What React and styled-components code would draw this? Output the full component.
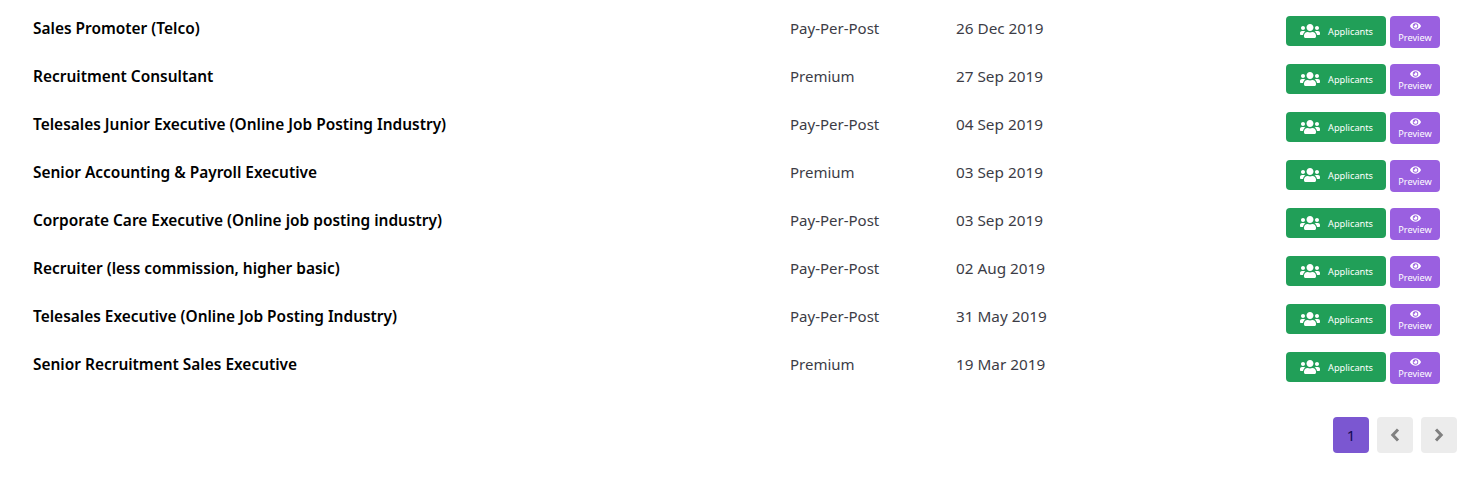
import React from "react"
import styled, { createGlobalStyle } from "styled-components"
import { FaUsers, FaEye } from "react-icons/fa"

const jobs = [
  { title: "Sales Promoter (Telco)", plan: "Pay-Per-Post", date: "26 Dec 2019" },
  { title: "Recruitment Consultant", plan: "Premium", date: "27 Sep 2019" },
  { title: "Telesales Junior Executive (Online Job Posting Industry)", plan: "Pay-Per-Post", date: "04 Sep 2019" },
  { title: "Senior Accounting & Payroll Executive", plan: "Premium", date: "03 Sep 2019" },
  { title: "Corporate Care Executive (Online job posting industry)", plan: "Pay-Per-Post", date: "03 Sep 2019" },
  { title: "Recruiter (less commission, higher basic)", plan: "Pay-Per-Post", date: "02 Aug 2019" },
  { title: "Telesales Executive (Online Job Posting Industry)", plan: "Pay-Per-Post", date: "31 May 2019" },
  { title: "Senior Recruitment Sales Executive", plan: "Premium", date: "19 Mar 2019" },
]

const GlobalStyle = createGlobalStyle`
  body {
    margin: 0;
    background: #fff;
    font-family: "Noto Sans", "Open Sans", sans-serif;
  }
`

const Page = styled.div`
  width: 1462px;
  height: 481px;
  overflow: hidden;
  padding-top: 8px;
  box-sizing: border-box;
`

const Row = styled.div`
  display: grid;
  grid-template-columns: 757px 166px 330px auto;
  align-items: center;
  height: 48px;
  padding-left: 33px;
`

const Title = styled.div`
  font-size: 15.45px;
  font-weight: 600;
  color: #000;
  margin-top: -8px;
`

const Cell = styled.div`
  font-size: ${p => p.size || "15px"};
  color: #3c3c46;
  margin-top: -8px;
`

const Actions = styled.div`
  display: flex;
  gap: 4px;
`

const ApplicantsButton = styled.div`
  display: flex;
  align-items: center;
  justify-content: center;
  gap: 8px;
  width: 100px;
  height: 30px;
  padding-left: 1px;
  background: #219f58;
  border-radius: 4px;
  color: #fff;
  font-size: 9.2px;
  box-sizing: border-box;
  svg {
    width: 20px;
    height: 16px;
  }
`

const PreviewButton = styled.div`
  display: flex;
  flex-direction: column;
  align-items: center;
  justify-content: center;
  width: 50px;
  height: 32px;
  padding-top: 1px;
  box-sizing: border-box;
  background: #9a60e0;
  border-radius: 4px;
  color: #fff;
  font-size: 9.2px;
  line-height: 13px;
  svg {
    width: 11px;
    height: 10px;
  }
`

const Pager = styled.div`
  display: flex;
  justify-content: flex-end;
  gap: 8px;
  padding: 25px 5px 0 0;
`

const PageButton = styled.div`
  display: flex;
  align-items: center;
  justify-content: center;
  width: 36px;
  height: 36px;
  border-radius: 4px;
  font-size: 15px;
  background: ${p => (p.active ? "#7b57d1" : "#ececec")};
  color: ${p => (p.active ? "#120a50" : "#808080")};
`

const Chevron = ({ points }) => (
  <svg width="10" height="14" viewBox="0 0 10 14" fill="none" stroke="currentColor" strokeWidth="3">
    <polyline points={points} />
  </svg>
)

export default function App() {
  return (
    <Page>
      <GlobalStyle />
      {jobs.map(job => (
        <Row key={job.title}>
          <Title>{job.title}</Title>
          <Cell>{job.plan}</Cell>
          <Cell size="15.3px">{job.date}</Cell>
          <Actions>
            <ApplicantsButton>
              <FaUsers />
              Applicants
            </ApplicantsButton>
            <PreviewButton>
              <FaEye />
              Preview
            </PreviewButton>
          </Actions>
        </Row>
      ))}
      <Pager>
        <PageButton active>1</PageButton>
        <PageButton>
          <Chevron points="8,1.5 2.8,7 8,12.5" />
        </PageButton>
        <PageButton>
          <Chevron points="2,1.5 7.2,7 2,12.5" />
        </PageButton>
      </Pager>
    </Page>
  )
}
